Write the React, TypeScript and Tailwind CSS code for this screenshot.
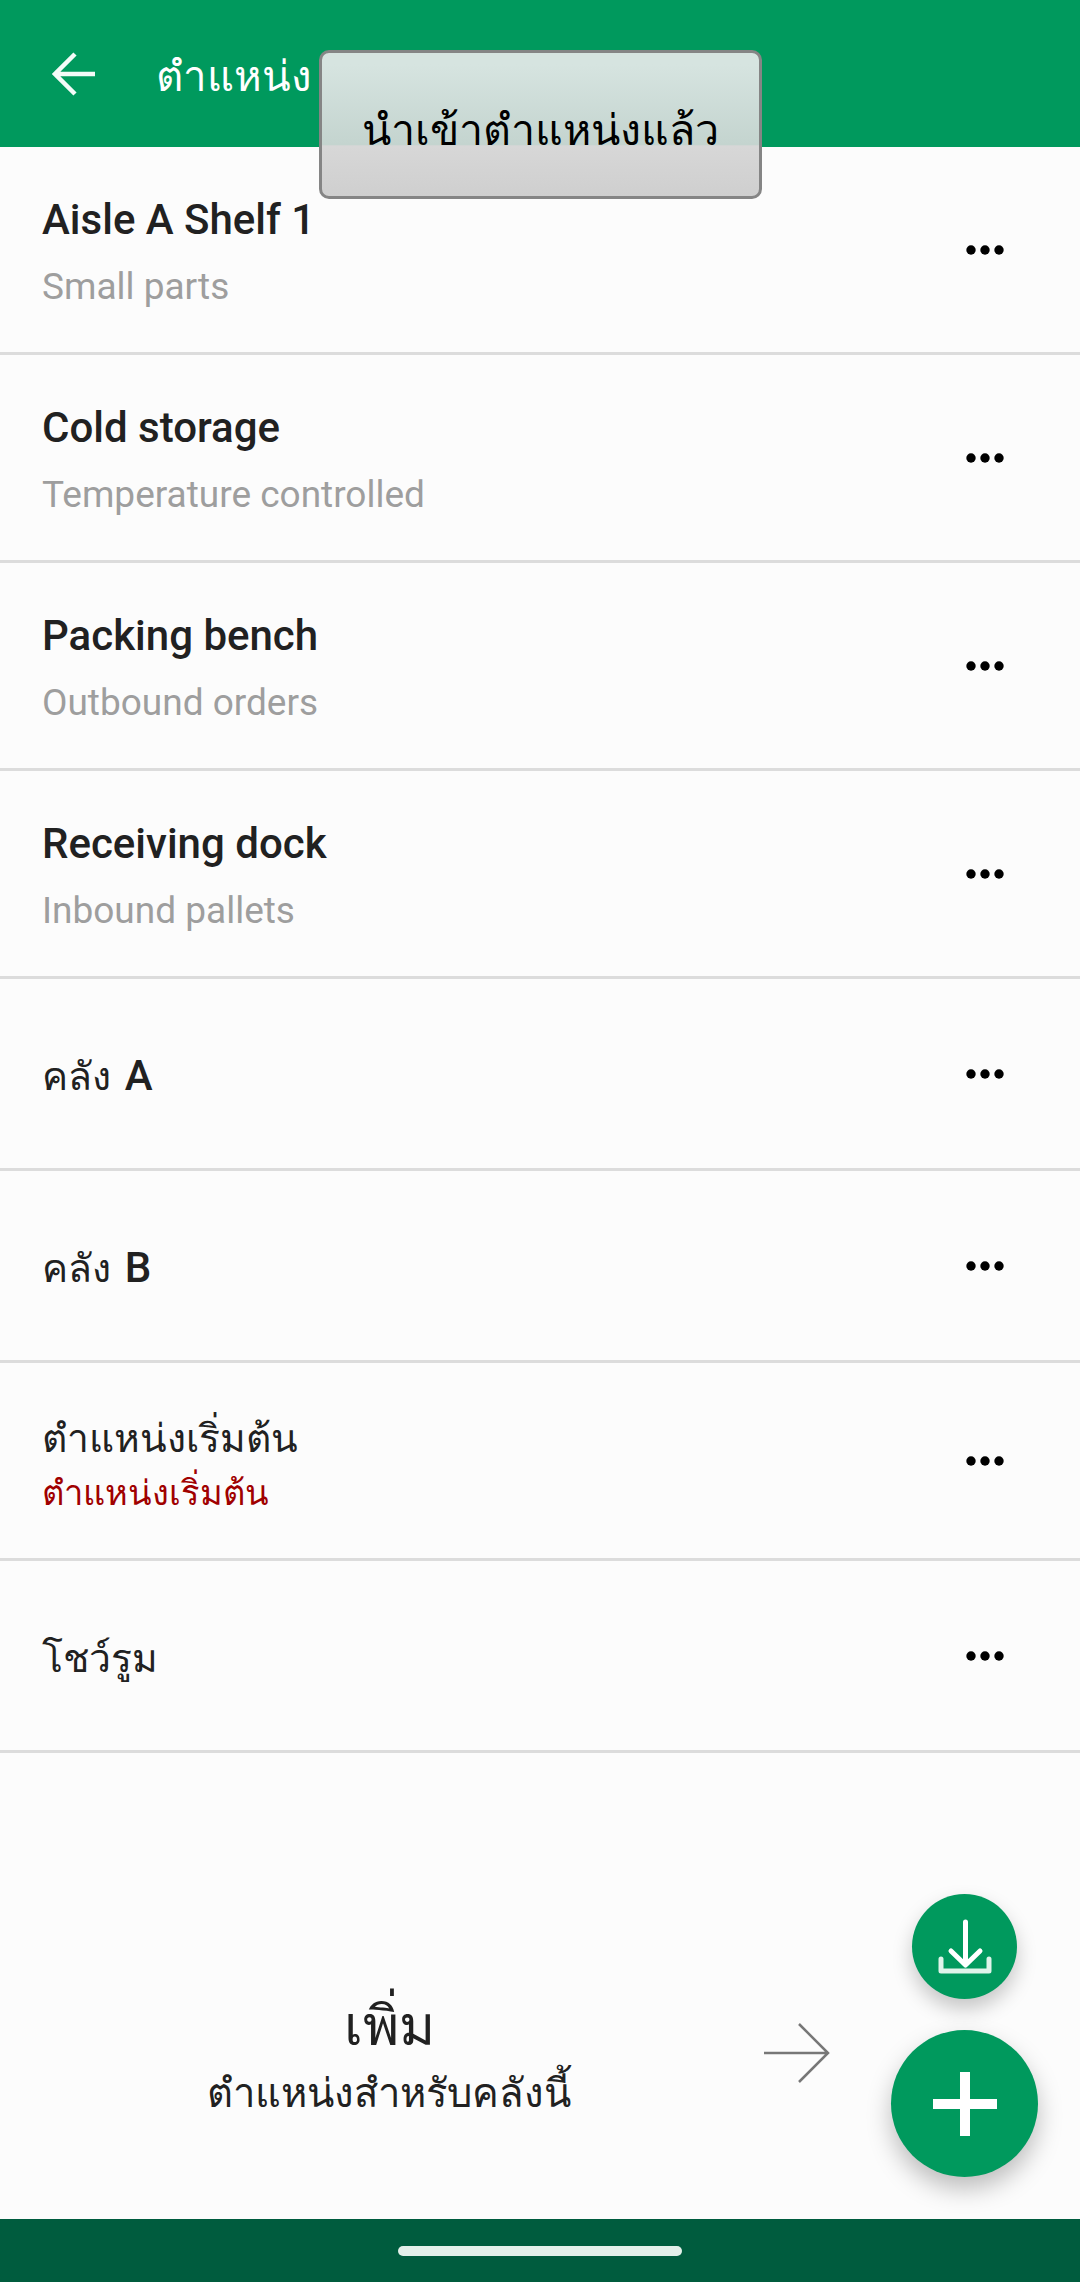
const sans = "font-['Roboto','Noto_Sans','DejaVu_Sans',sans-serif]";

function Dots() {
  return (
    <svg width="38" height="10" viewBox="0 0 38 10" className="shrink-0" aria-hidden="true">
      <circle cx="5" cy="5" r="4.7" fill="#000" />
      <circle cx="19" cy="5" r="4.7" fill="#000" />
      <circle cx="33" cy="5" r="4.7" fill="#000" />
    </svg>
  );
}

type RowProps = { title: React.ReactNode; sub?: string; red?: string; h: string };

function Row({ title, sub, red, h }: RowProps) {
  return (
    <div className={`flex ${h} shrink-0 items-center justify-between border-b-[3px] border-[#dcdcdc] pl-[42px] pr-[76px]`}>
      <div className="flex flex-col pt-[6px]">
        {sub ? (
          <>
            <span className="text-[42px] leading-[50px] font-medium text-[#212121]">{title}</span>
            <span className="mt-[18px] text-[37px] leading-[48px] text-[#9e9e9e]">{sub}</span>
          </>
        ) : red ? (
          <>
            <span className="text-[39px] leading-[48px] text-[#212121]">{title}</span>
            <span className="mt-[10px] text-[34.5px] leading-[40px] text-[#a00000]">{red}</span>
          </>
        ) : (
          <span className="text-[39px] leading-[52px] text-[#212121]">{title}</span>
        )}
      </div>
      <Dots />
    </div>
  );
}

export default function App() {
  return (
    <div className={`relative flex h-[2282px] w-[1080px] flex-col overflow-hidden bg-[#fcfcfc] ${sans}`}>
      <header className="flex h-[147px] shrink-0 items-center bg-[#00995d] pl-[52px]">
        <svg width="44" height="44" viewBox="0 0 44 44" fill="none" stroke="#f4fbf8" strokeWidth="4.5" aria-hidden="true">
          <path d="M43 22H4M23 2 3 22l20 20" />
        </svg>
        <span className="ml-[60px] mt-[6px] text-[42px] leading-[50px] text-white">ตำแหน่ง</span>
      </header>

      <Row h="h-[208px]" title="Aisle A Shelf 1" sub="Small parts" />
      <Row h="h-[208px]" title="Cold storage" sub="Temperature controlled" />
      <Row h="h-[208px]" title="Packing bench" sub="Outbound orders" />
      <Row h="h-[208px]" title="Receiving dock" sub="Inbound pallets" />
      <Row h="h-[192px]" title={<>คลัง <span className="ml-[4px] text-[42px] font-medium">A</span></>} />
      <Row h="h-[192px]" title={<>คลัง <span className="ml-[4px] text-[42px] font-medium">B</span></>} />
      <Row h="h-[198px]" title="ตำแหน่งเริ่มต้น" red="ตำแหน่งเริ่มต้น" />
      <Row h="h-[192px]" title="โชว์รูม" />

      <div className="flex min-h-0 flex-1 items-center pb-[2px] pl-[208px]">
        <div className="flex w-[362px] flex-col items-center pt-[143px]">
          <span className="text-[55px] leading-[64px] text-[#212121]">เพิ่ม</span>
          <span className="mt-[11px] whitespace-nowrap text-[40px] leading-[50px] text-[#212121]">ตำแหน่งสำหรับคลังนี้</span>
        </div>
        <svg width="66" height="60" viewBox="0 0 66 60" fill="none" stroke="#777" strokeWidth="2.5" className="ml-[194px] mt-[135px]" aria-hidden="true">
          <path d="M0 30H64M35 1 64 30 35 59" />
        </svg>
      </div>

      <footer className="flex h-[63px] shrink-0 items-start justify-center bg-[#005c3e] pt-[27px]">
        <div className="h-[10px] w-[284px] rounded-full bg-[#e3f0ea]" />
      </footer>

      <div className="absolute left-[319px] top-[50px] flex h-[149px] w-[443px] items-end justify-center rounded-[10px] border-[3px] border-[#858585] bg-[linear-gradient(to_bottom,#d6e4e0_8%,#c4d4cf_64%,#d7d7d7_65%,#cfcfcf_100%)] pb-[40px]">
        <span className="text-[43px] leading-[52px] text-black">นำเข้าตำแหน่งแล้ว</span>
      </div>

      <button className="absolute left-[912px] top-[1894px] flex h-[105px] w-[105px] items-center justify-center rounded-full bg-[#00995d] shadow-[0_10px_20px_rgba(0,0,0,0.22)]" aria-label="นำเข้า">
        <svg width="56" height="56" viewBox="0 0 56 56" fill="none" stroke="#fff" strokeWidth="5" strokeLinecap="round" strokeLinejoin="round" aria-hidden="true">
          <path d="M28.5 3V45M14 32 28.5 46 43 32" />
          <path d="M4 40V52H52V40" stroke="#dff4ea" />
        </svg>
      </button>
      <button className="absolute left-[891px] top-[2030px] flex h-[147px] w-[147px] items-center justify-center rounded-full bg-[#00995d] shadow-[0_12px_24px_rgba(0,0,0,0.25)]" aria-label="เพิ่ม">
        <svg width="64" height="64" viewBox="0 0 64 64" fill="#fff" aria-hidden="true">
          <path d="M27 0h10v27h27v10H37v27H27V37H0V27h27z" />
        </svg>
      </button>
    </div>
  );
}
